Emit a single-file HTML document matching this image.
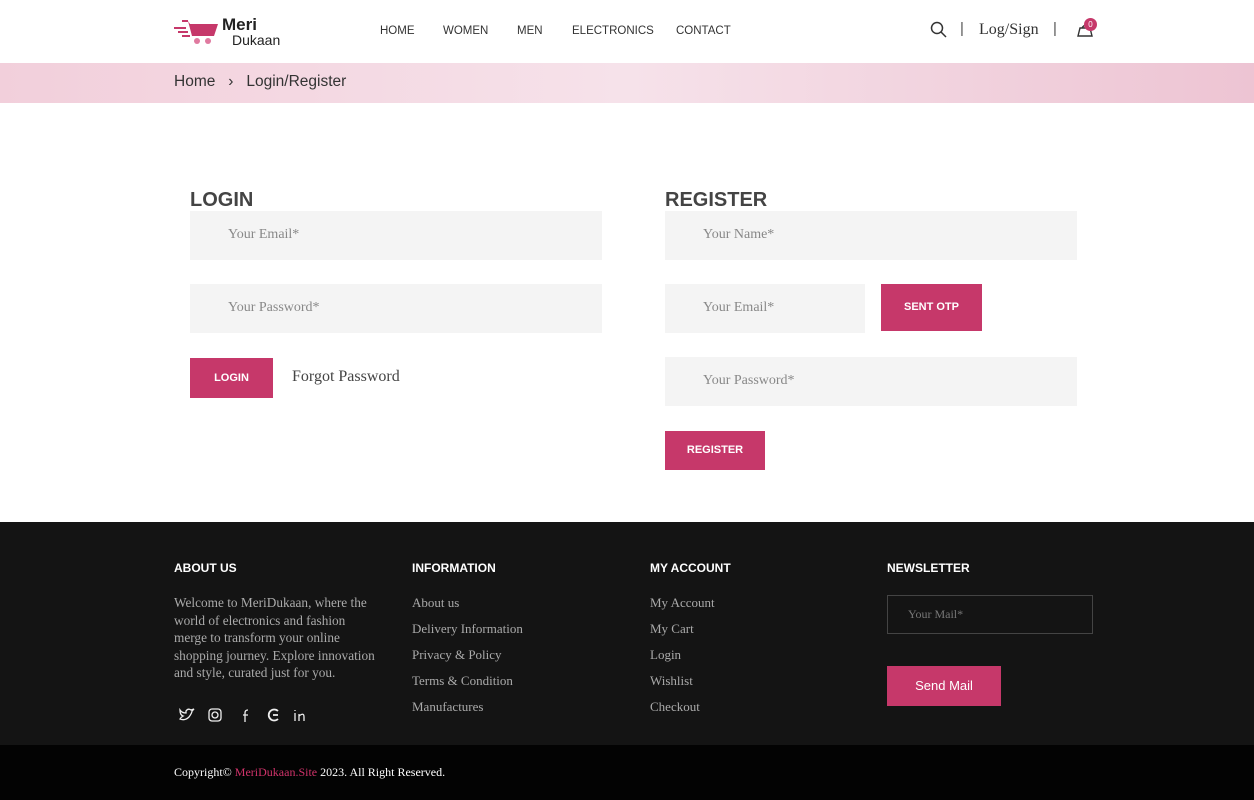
<!DOCTYPE html>
<html><head><meta charset="utf-8"><style>
*{margin:0;padding:0;box-sizing:border-box}
body{width:1254px;height:800px;background:#fff;font-family:"Liberation Sans",sans-serif;position:relative;overflow:hidden;color:#333}
.a{position:absolute}
.nav a{position:absolute;top:25px;font-size:11.5px;color:#333}
.breadcrumb{top:63px;left:0;width:1254px;height:40px;background:linear-gradient(90deg,#f2cfdb,#f6e2ea 50%,#edc4d3)}
h2{position:absolute;font-size:20px;font-weight:bold;color:#444}
.inp{position:absolute;background:#f4f4f4;height:49px;font-family:"Liberation Serif",serif;font-size:14px;color:#888;padding:16px 0 0 38px}
.btn{position:absolute;background:#c6386a;color:#fff;font-size:11px;font-weight:bold;text-align:center}
.foot{top:522px;left:0;width:1254px;height:223px;background:#141414}
.fh{position:absolute;top:561px;color:#fff;font-size:12px;font-weight:bold}
.fl{position:absolute;font-family:"Liberation Serif",serif;font-size:13px;color:#aaa;line-height:26px}
.copy{top:745px;left:0;width:1254px;height:55px;background:#030303}
</style></head><body>
<svg class="a" style="left:174px;top:18px" width="46" height="28" viewBox="0 0 46 28"><g stroke="#c6386a" stroke-width="2"><line x1="0" y1="10" x2="12" y2="10"/><line x1="4" y1="14" x2="14" y2="14"/><line x1="8" y1="18" x2="16" y2="18"/><line x1="8" y1="3" x2="14" y2="3"/></g><path d="M14 3 L18 18 L40 18 L44 6 L16 6Z" fill="#c6386a"/><circle cx="23" cy="23" r="3" fill="#e07aa0"/><circle cx="34" cy="23" r="3" fill="#e07aa0"/></svg>
<div class="a" style="left:222px;top:15px;font-size:17px;font-weight:bold;color:#222">Meri</div>
<div class="a" style="left:232px;top:32px;font-size:14px;color:#222">Dukaan</div>
<div class="nav"><a style="left:380px">HOME</a><a style="left:443px">WOMEN</a><a style="left:517px">MEN</a><a style="left:572px">ELECTRONICS</a><a style="left:676px">CONTACT</a></div>
<svg class="a" style="left:930px;top:21px" width="18" height="18" viewBox="0 0 18 18"><circle cx="7" cy="7" r="5.5" fill="none" stroke="#333" stroke-width="1.5"/><line x1="11" y1="11" x2="16" y2="16" stroke="#333" stroke-width="1.5"/></svg>
<div class="a" style="left:960px;top:20px;font-size:15px;color:#555">|</div>
<div class="a" style="left:979px;top:21px;font-family:'Liberation Serif',serif;font-size:16px;color:#333">Log/Sign</div>
<div class="a" style="left:1053px;top:20px;font-size:15px;color:#555">|</div>
<svg class="a" style="left:1076px;top:23px" width="18" height="14" viewBox="0 0 18 14"><path d="M2 13 L4 5 L14 5 L16 13Z M6 5 Q9 0 12 5" fill="none" stroke="#333" stroke-width="1.4"/></svg>
<div class="a" style="left:1084px;top:18px;width:13px;height:13px;border-radius:50%;background:#c6386a;color:#fff;font-size:8px;text-align:center;line-height:13px">0</div>
<div class="a breadcrumb"></div>
<div class="a" style="left:174px;top:73px;font-size:15.5px;color:#333">Home &nbsp;&nbsp;›&nbsp;&nbsp; Login/Register</div>
<h2 style="left:190px;top:189px">LOGIN</h2>
<div class="inp" style="left:190px;top:211px;width:412px">Your Email*</div>
<div class="inp" style="left:190px;top:284px;width:412px">Your Password*</div>
<div class="btn" style="left:190px;top:358px;width:83px;height:40px;line-height:40px">LOGIN</div>
<div class="a" style="left:292px;top:368px;font-family:'Liberation Serif',serif;font-size:16px;color:#444">Forgot Password</div>
<h2 style="left:665px;top:189px">REGISTER</h2>
<div class="inp" style="left:665px;top:211px;width:412px">Your Name*</div>
<div class="inp" style="left:665px;top:284px;width:200px">Your Email*</div>
<div class="btn" style="left:881px;top:284px;width:101px;height:47px;line-height:47px">SENT OTP</div>
<div class="inp" style="left:665px;top:357px;width:412px">Your Password*</div>
<div class="btn" style="left:665px;top:431px;width:100px;height:39px;line-height:39px">REGISTER</div>
<div class="a foot"></div>
<div class="fh" style="left:174px">ABOUT US</div>
<div class="fh" style="left:412px">INFORMATION</div>
<div class="fh" style="left:650px">MY ACCOUNT</div>
<div class="fh" style="left:887px">NEWSLETTER</div>
<div class="fl" style="left:174px;top:594px;width:205px;line-height:17.5px;font-size:13.3px">Welcome to MeriDukaan, where the world of electronics and fashion merge to transform your online shopping journey. Explore innovation and style, curated just for you.</div>
<div class="fl" style="left:412px;top:590px">About us<br>Delivery Information<br>Privacy &amp; Policy<br>Terms &amp; Condition<br>Manufactures</div>
<div class="fl" style="left:650px;top:590px">My Account<br>My Cart<br>Login<br>Wishlist<br>Checkout</div>
<div class="a" style="left:887px;top:595px;width:206px;height:39px;border:1px solid #444;font-family:'Liberation Serif',serif;font-size:12px;color:#777;padding:11px 0 0 20px">Your Mail*</div>
<div class="a" style="left:887px;top:666px;width:114px;height:40px;background:#c6386a;color:#fff;font-size:13px;text-align:center;line-height:40px">Send Mail</div>
<svg class="a" style="left:179px;top:708px" width="135" height="15" viewBox="0 0 135 15" fill="none" stroke="#eee" stroke-width="1.3"><path d="M1 11 Q6 13 10 9 Q13 5 13 3 L15 1 L12 2 Q9 0 7 3 L7 5 Q3 5 1 2 Q1 7 4 8 Q2 9 1 11Z"/><rect x="30" y="1" width="12" height="12" rx="3"/><circle cx="36" cy="7" r="3"/><path d="M66 14 L66 5 Q66 2 69 2 M64 7 L69 7"/><path d="M99 3 A5.5 5.5 0 1 0 99 11 M94 7 L99 7" stroke-width="1.8"/><path d="M116 5 L116 13 M116 2 L116 3 M120 13 L120 6 M120 8 Q125 4 125 9 L125 13"/></svg>
<div class="a copy"></div>
<div class="a" style="left:174px;top:765px;font-family:'Liberation Serif',serif;font-size:12px;color:#fff">Copyright© <span style="color:#d0336a">MeriDukaan.Site</span> 2023. All Right Reserved.</div>
</body></html>
